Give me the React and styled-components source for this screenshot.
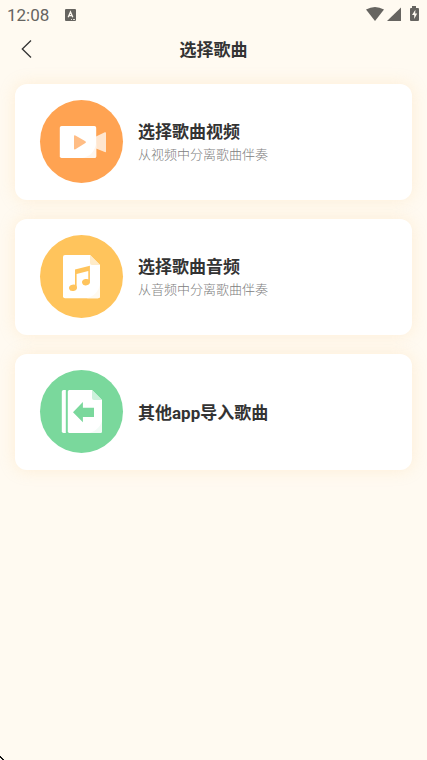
import React from 'react';
import styled, { createGlobalStyle } from 'styled-components';

const GlobalStyle = createGlobalStyle`
  * {
    box-sizing: border-box;
  }
  body {
    margin: 0;
    background: #fffaf1;
    color: #333;
    font-family: Roboto, "Noto Sans CJK SC", sans-serif;
  }
`;

const Screen = styled.div`
  display: flex;
  flex-direction: column;
  min-height: 100vh;
`;

const StatusBar = styled.div`
  display: flex;
  align-items: center;
  height: 30px;
  padding: 0 7px;
  color: #666460;
`;

const Clock = styled.span`
  font-size: 17px;
  line-height: 30px;
`;

const KeyboardBadge = styled.svg`
  margin-left: 16px;
`;

const StatusIcons = styled.div`
  display: flex;
  height: 18px;
  margin-left: auto;
`;

const Header = styled.header`
  display: grid;
  grid-template-columns: 52px 1fr 52px;
  align-items: center;
  height: 38px;
`;

const BackButton = styled.button`
  display: flex;
  padding: 8px 20px;
  border: 0;
  background: none;
  color: #333;
  cursor: pointer;
`;

const PageTitle = styled.h1`
  margin: 0;
  padding-top: 2px;
  font-size: 17px;
  font-weight: 700;
  line-height: 24px;
  text-align: center;
`;

const OptionList = styled.main`
  display: flex;
  flex-direction: column;
  gap: 19px;
  padding: 16px 15px;
`;

const OptionCard = styled.button`
  display: flex;
  align-items: center;
  gap: 15px;
  width: 100%;
  min-height: 116px;
  padding: 16px 25px 17px;
  border: 0;
  border-radius: 12px;
  background: #fff;
  box-shadow: 0 0 16px rgba(250, 205, 130, 0.25);
  color: inherit;
  font-family: inherit;
  text-align: left;
  cursor: pointer;
`;

const OptionIcon = styled.span`
  display: flex;
  flex: none;
  width: 83px;
  height: 83px;
  border-radius: 50%;
  background: ${(props) => props.$color};
  color: ${(props) => props.$color};
`;

const OptionText = styled.span`
  display: flex;
  flex-direction: column;
  padding-top: 3px;
`;

const OptionTitle = styled.span`
  font-size: 17px;
  font-weight: 700;
  line-height: 24px;
`;

const OptionHint = styled.span`
  color: #808080;
  font-size: 13px;
  font-weight: 300;
  line-height: 22px;
`;

const ScreenCorner = styled.svg`
  position: fixed;
  bottom: 0;
  left: 0;
`;

function VideoIcon() {
  return (
    <svg width="83" height="83" viewBox="0 0 83 83" aria-hidden="true">
      <path d="M56 36.5 64.8 32.3Q66 31.8 66 33V51.5Q66 52.6 64.8 52.1L56 48.5Z" fill="#ffe6cf" />
      <rect x="19.8" y="26" width="36.4" height="32" rx="1.8" fill="#fff" />
      <path d="M56.2 43C55 51 50 57 42 58H54.4Q56.2 58 56.2 56.2Z" fill="#fff6ee" />
      <path d="M34 36.2Q34 34.6 35.4 35.4L45.4 41.3Q46.6 42.2 45.4 43L35.4 49.2Q34 50 34 48.4Z" fill="#ffbd85" />
    </svg>
  );
}

function AudioIcon() {
  return (
    <svg width="83" height="83" viewBox="0 0 83 83" aria-hidden="true">
      <path d="M25 20H50L60 30V61.2Q60 63.2 58 63.2H25Q23 63.2 23 61.2V22Q23 20 25 20Z" fill="#fff" />
      <path d="M60 50C58 57 54 61 47 63.2H58Q60 63.2 60 61.2Z" fill="#fffaf0" />
      <path d="M50 20 60 30H52Q50 30 50 28Z" fill="#ffebc8" />
      <path
        d="M35 34.5 49.9 30.8V46.5H48.3V36L36.6 38.9V53H35Z"
        fill="currentColor"
      />
      <ellipse cx="33" cy="52.8" rx="4" ry="3.2" transform="rotate(-12 33 52.8)" fill="currentColor" />
      <ellipse cx="46" cy="47.2" rx="4" ry="3.2" transform="rotate(-12 46 47.2)" fill="currentColor" />
    </svg>
  );
}

function ImportIcon() {
  return (
    <svg width="83" height="83" viewBox="0 0 83 83" aria-hidden="true">
      <path d="M23.5 20H25.8V63H23.5Q21.8 63 21.8 61.3V21.7Q21.8 20 23.5 20Z" fill="#fff" />
      <path d="M29.4 20H52L62 30V61.3Q62 63 60.3 63H29.4Q27.8 63 27.8 61.3V21.7Q27.8 20 29.4 20Z" fill="#fff" />
      <path d="M62 51C60 57 56 61 49 63H60.3Q62 63 62 61.3Z" fill="#f2fbf6" />
      <path d="M52 20 62 30H54Q52 30 52 28Z" fill="#cdf1dc" />
      <path d="M33 42.2 42.9 32V37.8H54V47H42.9V52.3Z" fill="currentColor" />
    </svg>
  );
}

const options = [
  { title: '选择歌曲视频', hint: '从视频中分离歌曲伴奏', color: '#ffa352', Icon: VideoIcon },
  { title: '选择歌曲音频', hint: '从音频中分离歌曲伴奏', color: '#ffc45c', Icon: AudioIcon },
  { title: '其他app导入歌曲', color: '#7ad89c', Icon: ImportIcon },
];

export default function App() {
  return (
    <Screen>
      <GlobalStyle />
      <StatusBar>
        <Clock>12:08</Clock>
        <KeyboardBadge width="11" height="12" viewBox="0 0 11 12" aria-hidden="true">
          <rect width="11" height="12" rx="1" fill="currentColor" />
          <path d="M3.2 8.3 5.5 3 7.8 8.3M4 6.7H7" fill="none" stroke="#fffaf1" strokeWidth="1.3" />
          <path d="M6 10.5H7M8 10.5H10" stroke="#fffaf1" strokeWidth="0.8" />
        </KeyboardBadge>
        <StatusIcons>
          <svg width="54" height="16" viewBox="0 0 54 16" aria-hidden="true">
            <path d="M0 3.6Q9 -1.8 18 3.6L9 15Z" fill="currentColor" />
            <path d="M35 1.5V15H21Z" fill="currentColor" />
            <path
              d="M46 0H50V2H52Q53 2 53 3V14Q53 15 52 15H45Q44 15 44 14V3Q44 2 45 2H46Z"
              fill="currentColor"
            />
            <path d="M49.4 3.8 46 9H48.2V13L51.2 7.6H49.2Z" fill="#fffaf1" />
          </svg>
        </StatusIcons>
      </StatusBar>

      <Header>
        <BackButton type="button" aria-label="返回">
          <svg width="12" height="20" viewBox="0 0 12 20" aria-hidden="true">
            <path d="M11 1.5 2.3 10 11 18.5" fill="none" stroke="currentColor" strokeWidth="1.3" />
          </svg>
        </BackButton>
        <PageTitle>选择歌曲</PageTitle>
      </Header>

      <OptionList>
        {options.map(({ title, hint, color, Icon }) => (
          <OptionCard key={title} type="button">
            <OptionIcon $color={color}>
              <Icon />
            </OptionIcon>
            <OptionText>
              <OptionTitle>{title}</OptionTitle>
              {hint && <OptionHint>{hint}</OptionHint>}
            </OptionText>
          </OptionCard>
        ))}
      </OptionList>

      <ScreenCorner width="4" height="4" viewBox="0 0 4 4" aria-hidden="true">
        <path d="M0 0H1V1H2V2H3V3H4V4H2V3H1V2H0Z" fill="#111" />
      </ScreenCorner>
    </Screen>
  );
}
